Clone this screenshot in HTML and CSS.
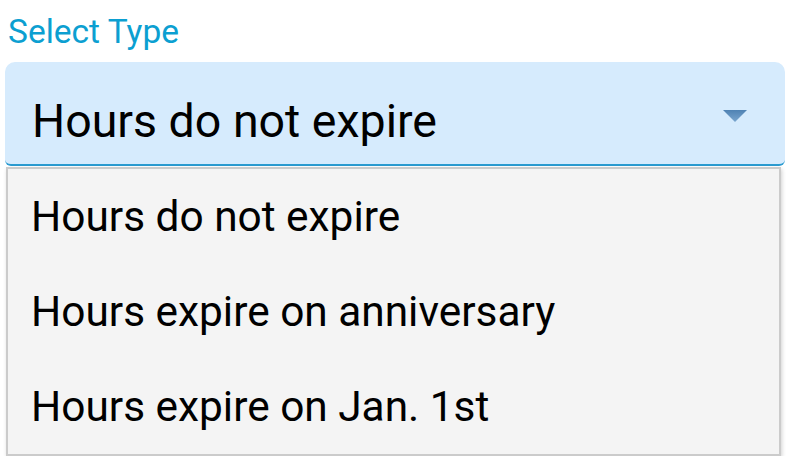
FILE: index.html
```html
<!DOCTYPE html>
<html>
<head>
<meta charset="utf-8">
<link rel="stylesheet" href="styles.css">
</head>
<body>
<div class="field">
  <div class="label">Select Type</div>
  <div class="select">
    <span class="value">Hours do not expire</span>
    <svg class="arrow" width="24" height="12" viewBox="0 0 24 12">
      <defs>
        <linearGradient id="g" x1="0" y1="0" x2="0" y2="1">
          <stop offset="0" stop-color="#4f82b3"/>
          <stop offset="1" stop-color="#7aa6cf"/>
        </linearGradient>
      </defs>
      <polygon points="0,0 24,0 12,12" fill="url(#g)"/>
    </svg>
  </div>
  <div class="menu">
    <div class="item">Hours do not expire</div>
    <div class="item">Hours expire on anniversary</div>
    <div class="item">Hours expire on Jan. 1st</div>
  </div>
</div>
</body>
</html>
```
FILE: styles.css
```css
html, body {
  margin: 0;
  padding: 0;
  background: #ffffff;
  font-family: Roboto, "Noto Sans", sans-serif;
}
.field {
  padding: 11px 1px 0 5px;
}
.label {
  color: #0c9fd1;
  font-size: 33.5px;
  line-height: 42px;
  padding-left: 3px;
  margin-bottom: 9px;
}
.select {
  height: 102px;
  background: #d6ebfd;
  border-radius: 10px 10px 6px 6px;
  border-bottom: 2px solid #2b9bd0;
  display: flex;
  align-items: center;
  padding: 0 38px 0 27px;
}
.value {
  flex: 1;
  font-size: 46.5px;
  color: #000;
  padding-top: 16px;
}
.arrow {
  display: block;
  margin-top: 6px;
}
.menu {
  margin: 1px 4px 0 1px;
  background: #f4f4f4;
  border: 2px solid #cbcbcb;
  box-shadow: 1px 2px 4px rgba(0,0,0,0.18);
}
.item {
  height: 95px;
  display: flex;
  align-items: center;
  padding-left: 23px;
  font-size: 42.4px;
  color: #000;
}
```
